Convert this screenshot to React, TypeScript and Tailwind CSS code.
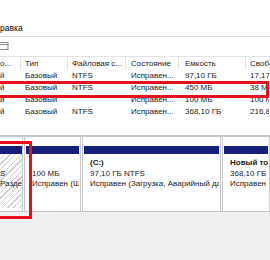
import React from "react";

const cols = [
  { w: "w-[21px]", pl: "pl-0" },
  { w: "w-[47px]", pl: "pl-[4px]" },
  { w: "w-[58px]", pl: "pl-[4px]" },
  { w: "w-[53px]", pl: "pl-[5px]" },
  { w: "w-[67px]", pl: "pl-[6px]" },
  { w: "flex-1", pl: "pl-[4px]" },
];

const header = ["о...", "Тип", "Файловая с...", "Состояние", "Емкость", "Свободно"];
const rows = [
  ["й", "Базовый", "NTFS", "Исправен...", "97,10 ГБ", "17,17 ГБ"],
  ["й", "Базовый", "NTFS", "Исправен...", "450 МБ", "38 МБ"],
  ["й", "Базовый", "", "Исправен...", "100 МБ", "100 МБ"],
  ["й", "Базовый", "NTFS", "Исправен...", "368,10 ГБ", "216,80 ГБ"],
];

function Partition({
  className,
  hatched,
  lines,
  bold,
}: {
  className: string;
  hatched?: boolean;
  lines: string[];
  bold?: boolean;
}) {
  return (
    <div className={`flex flex-col border-x border-[#c9c9c9] bg-white px-[1px] pt-[9px] pb-[3px] overflow-hidden ${className}`}>
      <div className="h-[8px] bg-[#16207a] shrink-0" />
      <div
        className={`flex-1 pt-[4px] overflow-hidden whitespace-nowrap leading-[10.5px] ${
          hatched
            ? "bg-[repeating-linear-gradient(135deg,#ffffff_0px,#ffffff_3px,#c9c9c9_3px,#c9c9c9_4px)] pl-0"
            : "pl-[6px]"
        }`}
      >
        {lines.map((l, i) => (
          <div key={i} className={`h-[10.5px] ${i === 0 && bold ? "font-bold" : ""}`}>
            {l || "\u00a0"}
          </div>
        ))}
      </div>
    </div>
  );
}

export default function App() {
  return (
    <div className="relative w-[270px] h-[260px] overflow-hidden bg-white font-['Liberation_Sans',Arial,sans-serif] text-[8px] text-[#1a1a1a]">
      {/* menu */}
      <div className="h-[36px] flex items-end pb-[3px] text-[8.5px] text-black leading-[10px]">равка</div>
      {/* toolbar */}
      <div className="h-[20px] border-t border-[#dcdcdc] flex items-start pt-[5px]">
        <svg width="9" height="8" viewBox="0 0 9 8" className="block">
          <rect x="-3" y="0.5" width="11" height="7" fill="#fff" stroke="#8a8a8a" />
          <line x1="-3" y1="2.5" x2="8" y2="2.5" stroke="#8a8a8a" />
        </svg>
      </div>
      {/* header */}
      <div className="flex h-[14px] border-t border-[#e3e3e3] items-stretch">
        {header.map((h, i) => (
          <div
            key={i}
            className={`${cols[i].w} ${cols[i].pl} border-r border-[#e3e3e3] flex items-center whitespace-nowrap overflow-hidden`}
          >
            {h}
          </div>
        ))}
      </div>
      {/* rows */}
      <div className="flex flex-col">
        {rows.map((r, ri) => (
          <div key={ri} className="flex h-[12px] items-center">
            {r.map((c, ci) => (
              <div
                key={ci}
                className={`${cols[ci].w} ${cols[ci].pl} border-r border-transparent whitespace-nowrap overflow-hidden`}
              >
                {c}
              </div>
            ))}
          </div>
        ))}
      </div>
      <div className="h-[17px]" />
      {/* splitter */}
      <div className="h-[2px] bg-[#c6c6c6]" />
      {/* disk row */}
      <div className="h-[74px] flex gap-[1px] bg-white">
        <Partition className="w-[24px] -ml-[1px] !px-0" hatched lines={["", "S", "Разде"]} />
        <Partition className="w-[57px]" lines={["", "100 МБ", "Исправен (Шифрованный"]} />
        <Partition
          className="w-[139px]"
          bold
          lines={["(C:)", "97,10 ГБ NTFS", "Исправен (Загрузка, Аварийный дамп"]}
        />
        <Partition className="flex-1" bold lines={["Новый том", "368,10 ГБ NTFS", "Исправен (Основной раздел)"]} />
      </div>
      <div className="h-[1px] bg-[#c6c6c6]" />
      <div className="flex-1 h-[60px] bg-[#f0f0f0]" />

      {/* red highlight boxes */}
      <div className="absolute left-[-4px] top-[81px] w-[273px] h-[17px] border-[3px] border-[#e3101e]" />
      <div className="absolute left-[-4px] top-[141px] w-[36px] h-[78px] border-[3px] border-[#e3101e]" />
    </div>
  );
}
